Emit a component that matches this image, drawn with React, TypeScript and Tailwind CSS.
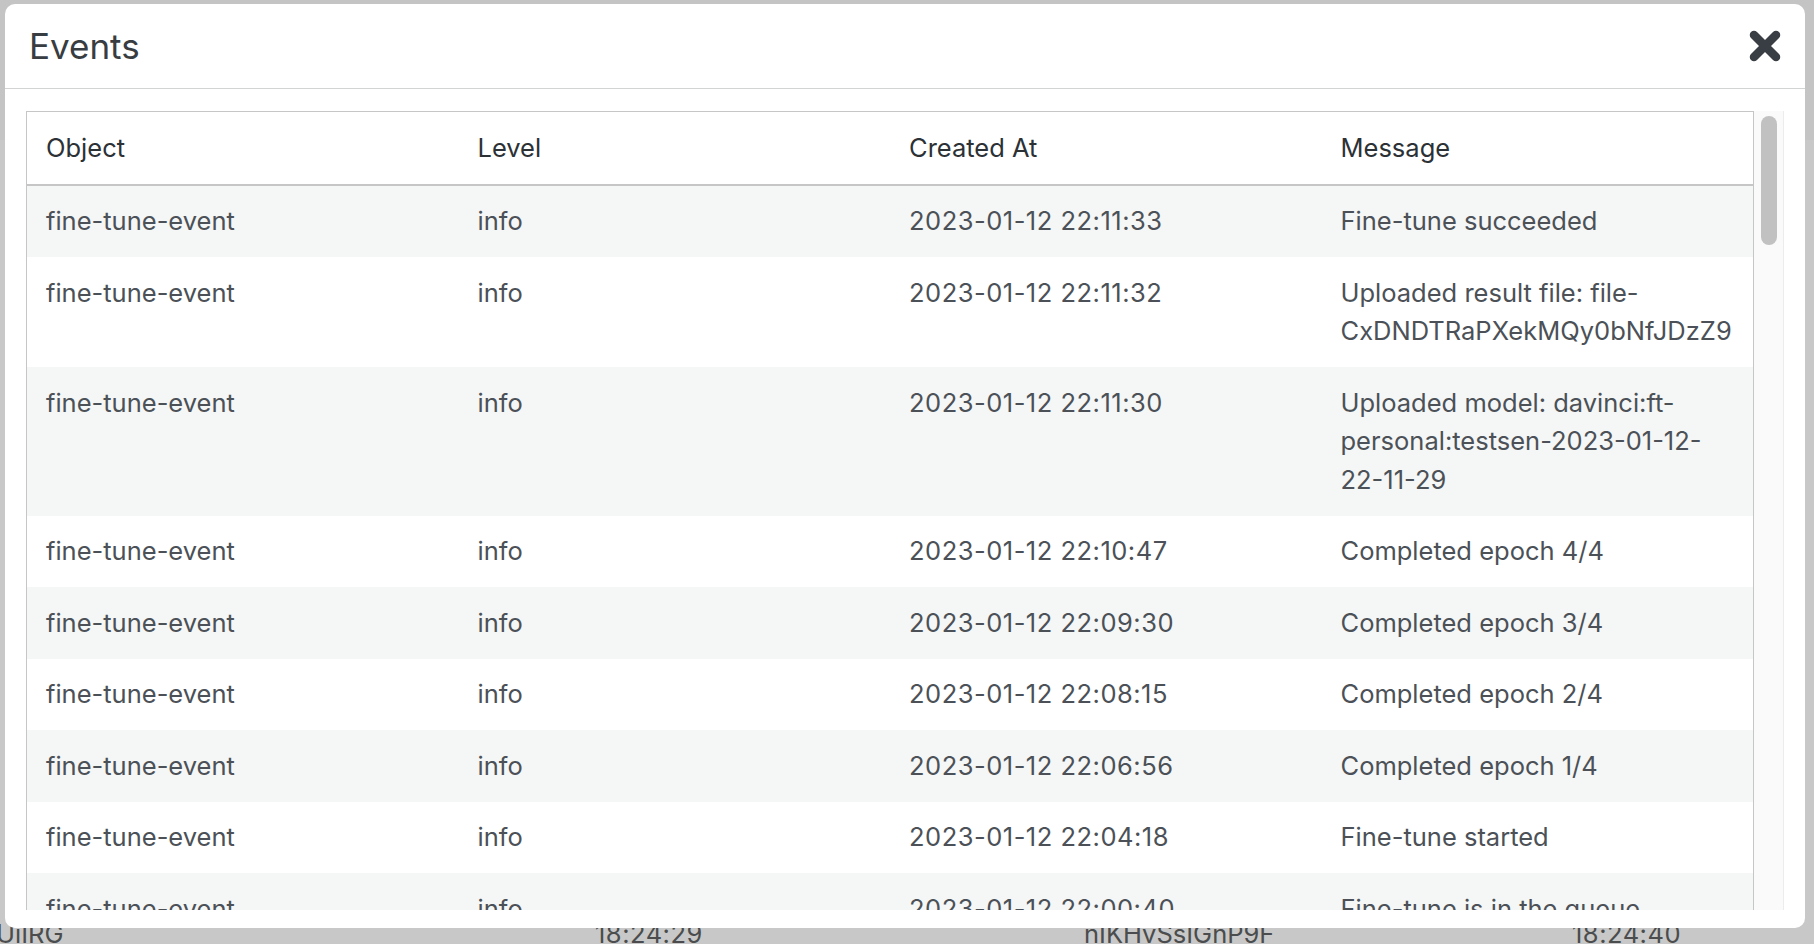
import React from "react";

type Row = { obj: string; level: string; at: string; msg: string };

const rows: Row[] = [
  { obj: "fine-tune-event", level: "info", at: "2023-01-12 22:11:33", msg: "Fine-tune succeeded" },
  { obj: "fine-tune-event", level: "info", at: "2023-01-12 22:11:32", msg: "Uploaded result file: file-CxDNDTRaPXekMQy0bNfJDzZ9" },
  { obj: "fine-tune-event", level: "info", at: "2023-01-12 22:11:30", msg: "Uploaded model: davinci:ft-personal:testsen-2023-01-12-22-11-29" },
  { obj: "fine-tune-event", level: "info", at: "2023-01-12 22:10:47", msg: "Completed epoch 4/4" },
  { obj: "fine-tune-event", level: "info", at: "2023-01-12 22:09:30", msg: "Completed epoch 3/4" },
  { obj: "fine-tune-event", level: "info", at: "2023-01-12 22:08:15", msg: "Completed epoch 2/4" },
  { obj: "fine-tune-event", level: "info", at: "2023-01-12 22:06:56", msg: "Completed epoch 1/4" },
  { obj: "fine-tune-event", level: "info", at: "2023-01-12 22:04:18", msg: "Fine-tune started" },
  { obj: "fine-tune-event", level: "info", at: "2023-01-12 22:00:40", msg: "Fine-tune is in the queue" },
  { obj: "fine-tune-event", level: "info", at: "2023-01-12 22:00:39", msg: "Created fine-tune" },
];

const font = { fontFamily: "Inter, 'Noto Sans', sans-serif" };

export default function App() {
  return (
    <div className="relative w-[1814px] h-[944px] overflow-hidden bg-[#c7c8c7]" style={font}>
      {/* backdrop page */}
      <div className="flex flex-col text-[25.5px] leading-[37.5px] text-[#4a4c4d]">
        <div className="h-[140px] bg-[#c3c4c3]" />
        <div className="h-[775px]" />
        <div className="flex">
          <div className="w-[599px] ml-[-4px]">UiIRG</div>
          <div className="w-[489px] tracking-[0.5px]">18:24:29</div>
          <div className="w-[488px]">nIKHvSsIGnP9F</div>
          <div className="tracking-[0.5px]">18:24:40</div>
        </div>
      </div>

      {/* modal */}
      <div className="absolute left-[5px] top-[4px] w-[1800px] h-[924px] bg-white rounded-[10px] flex flex-col overflow-hidden">
        <div className="h-[85px] shrink-0 border-b border-[#d2d3d3] flex items-center justify-between pl-[24px] pr-[23px]">
          <h5 className="text-[35px] leading-[43px] text-[#383d42] font-normal">Events</h5>
          <svg width="34" height="34" viewBox="0 0 34 34" className="text-[#393e44]">
            <path d="M6 6 L28 28 M28 6 L6 28" stroke="currentColor" strokeWidth="8.5" strokeLinecap="round" />
          </svg>
        </div>
        <div className="flex-1 min-h-0 pt-[22px] px-[21px] pb-[18px] flex">
          <div className="flex-1 min-w-0 overflow-hidden border-l border-t border-r border-[#c6c6c6]">
            <table className="w-full table-fixed border-collapse text-[25.5px] leading-[38.5px]">
              <thead>
                <tr className="border-b-2 border-[#c6c6c6]">
                  {["Object", "Level", "Created At", "Message"].map((h) => (
                    <th key={h} className="text-left font-normal text-[#2c3136] px-[19px] pt-[17px] pb-[16px] align-top">
                      {h}
                    </th>
                  ))}
                </tr>
              </thead>
              <tbody className="text-[#4b5157]">
                {rows.map((r, i) => (
                  <tr key={i} className={i % 2 === 0 ? "bg-[#f5f6f6]" : "bg-white"}>
                    <td className="px-[19px] py-[16.5px] align-top">{r.obj}</td>
                    <td className="px-[19px] py-[16.5px] align-top">{r.level}</td>
                    <td className="px-[19px] py-[16.5px] align-top tracking-[0.5px]">{r.at}</td>
                    <td className="pl-[19px] pr-[16px] py-[16.5px] align-top">{r.msg}</td>
                  </tr>
                ))}
              </tbody>
            </table>
          </div>
          <div className="w-[30px] shrink-0 bg-[#fafafa] border-r border-[#ececec] pt-[5px] flex justify-center">
            <div className="w-[16px] h-[129px] rounded-full bg-[#c1c1c1]" />
          </div>
        </div>
      </div>
    </div>
  );
}
